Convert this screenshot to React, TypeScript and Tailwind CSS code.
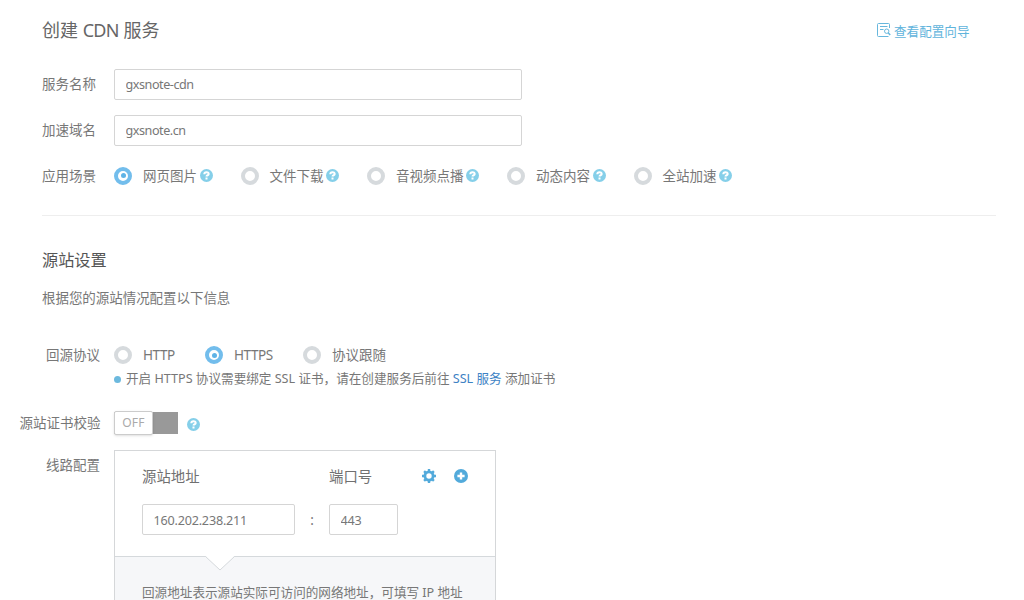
import React from "react";

const scenes = ["网页图片", "文件下载", "音视频点播", "动态内容", "全站加速"];

const Radio: React.FC<{ checked?: boolean }> = ({ checked }) => (
  <span
    className={`flex size-[18px] shrink-0 items-center justify-center rounded-full border-4 bg-white ${
      checked ? "border-[#72bdec]" : "border-[#d6dadd]"
    }`}
  >
    {checked && <span className="size-[5px] rounded-full bg-[#5fb3e6]" />}
  </span>
);

const HelpIcon: React.FC = () => (
  <svg className="size-[13px] shrink-0" viewBox="0 0 13 13" fill="none">
    <circle cx="6.5" cy="6.5" r="6.5" fill="#85cfe9" />
    <path d="M4.3 5.2C4.3 2.7 8.7 2.6 8.7 4.9c0 1.5-2.2 1.2-2.2 2.7" stroke="#fff" strokeWidth="2" />
    <path d="M5.5 8.5h2v2h-2z" fill="#fff" />
  </svg>
);

const GuideIcon: React.FC = () => (
  <svg className="h-[14px] w-[14px]" viewBox="0 0 14 14" fill="none" stroke="#67b7dd" strokeWidth="1">
    <path d="M12.5 5V1.5a1 1 0 0 0-1-1h-10a1 1 0 0 0-1 1v11a1 1 0 0 0 1 1h10M3 3.5h7.5M3 6.5h3.5" />
    <circle cx="9.7" cy="8.2" r="2.2" />
    <path d="M11.2 9.8l2 2.2" strokeWidth="1.5" />
  </svg>
);

const GearIcon: React.FC = () => (
  <svg className="size-[14px]" viewBox="0 0 14 14" fill="none">
    <g stroke="#52aadb" strokeWidth="2.4">
      <path d="M7 0v3M7 11v3M0 7h3M11 7h3M2.1 2.1l2 2M9.9 9.9l2 2M2.1 11.9l2-2M9.9 4.1l2-2" />
    </g>
    <circle cx="7" cy="7" r="4.1" stroke="#52aadb" strokeWidth="2.8" />
  </svg>
);

const PlusIcon: React.FC = () => (
  <svg className="size-[14px]" viewBox="0 0 14 14" fill="none">
    <circle cx="7" cy="7" r="7" fill="#52aadb" />
    <path d="M7 3.4v7.2M3.4 7h7.2" stroke="#fff" strokeWidth="2.4" />
  </svg>
);

const TextField: React.FC<{ value: string; className: string }> = ({ value, className }) => (
  <input
    className={`rounded-[2px] border border-[#d5d5d5] bg-white px-[10.5px] text-[12.6px] text-[#777] outline-none ${className}`}
    defaultValue={value}
  />
);

export default function App() {
  return (
    <div className="h-[600px] w-[1024px] overflow-hidden bg-white font-['Noto_Sans','Noto_Sans_CJK_SC',sans-serif] text-[13.5px] leading-5 text-[#777]">
      <header className="flex h-[69px] items-start justify-between pr-[54.5px] pl-[42px]">
        <h1 className="mt-[18px] text-[18px] leading-6 text-[#666]">
          创建 <span className="tracking-[-0.7px]">CDN</span> 服务
        </h1>
        <a className="mt-[21px] flex gap-[3px] text-[12.6px] text-[#5fb4dc]">
          <span className="mt-[2px]">
            <GuideIcon />
          </span>
          <span className="mt-px">查看配置向导</span>
        </a>
      </header>

      <div className="flex h-[31px] items-center">
        <span className="mb-px ml-[42px] w-[72px]">服务名称</span>
        <TextField value="gxsnote-cdn" className="h-[31px] w-[408px] tracking-[-0.45px]" />
      </div>
      <div className="mt-[15px] flex h-[31px] items-center">
        <span className="mb-[2px] ml-[42px] w-[72px]">加速域名</span>
        <TextField value="gxsnote.cn" className="h-[31px] w-[408px] tracking-[-0.45px]" />
      </div>
      <div className="mt-[19.5px] flex h-5 items-center">
        <span className="ml-[42px] w-[72px]">应用场景</span>
        <div className="flex gap-[28px]">
          {scenes.map((name, i) => (
            <label key={name} className="flex items-center">
              <Radio checked={i === 0} />
              <span className="mr-[2.5px] ml-[11px]">{name}</span>
              <HelpIcon />
            </label>
          ))}
        </div>
      </div>

      <hr className="mt-[29.5px] mr-[28px] ml-[42px] border-[#eee]" />

      <section>
        <h2 className="mt-[32px] ml-[42px] text-[16.2px] leading-6 text-[#555]">源站设置</h2>
        <p className="mt-[16px] ml-[42px] tracking-[-0.05px]">根据您的源站情况配置以下信息</p>

        <div className="mt-[37px] flex h-5 items-center">
          <span className="mr-[14px] w-[100px] text-right">回源协议</span>
          <label className="flex w-[91px] items-center gap-[11px]">
            <Radio />
            <span className="tracking-[-0.4px]">HTTP</span>
          </label>
          <label className="flex w-[98px] items-center gap-[11px]">
            <Radio checked />
            <span className="tracking-[-0.4px]">HTTPS</span>
          </label>
          <label className="flex items-center gap-[11px]">
            <Radio />
            协议跟随
          </label>
        </div>
        <div className="mt-1 ml-[114px] flex items-center text-[12.6px]">
          <span className="mr-[5px] size-[7px] rounded-full bg-[#6cb9de]" />
          <p className="whitespace-pre">
            开启 HTTPS 协议需要绑定 SSL 证书，请在创建服务后前往 <a className="text-[#3d82c4]">SSL 服务</a> 添加证书
          </p>
        </div>

        <div className="mt-[22px] flex h-6 items-center">
          <span className="mr-[13.5px] w-[100.5px] text-right">源站证书校验</span>
          <div className="flex h-[22px] w-[64px] bg-[#999]">
            <span className="-my-px flex h-6 w-[39px] items-center justify-center rounded-[2px] border border-[#ccc] bg-white text-[12px] tracking-[0.3px] text-[#aaa] shadow-sm">
              OFF
            </span>
          </div>
          <span className="mt-[3px] ml-[9px]">
            <HelpIcon />
          </span>
        </div>

        <div className="mt-[15px] flex items-start">
          <span className="mt-[5px] mr-[14px] w-[100px] text-right">线路配置</span>
          <div className="w-[382px] border border-[#d5d7d9]">
            <div className="flex h-[105px] flex-col pl-[27px]">
              <div className="mt-[15px] flex items-center text-[14.4px] text-[#707070]">
                <span className="mt-px -mb-px w-[187px]">源站地址</span>
                <span className="mt-px -mb-px w-[92.5px]">端口号</span>
                <span className="mr-[18.5px]">
                  <GearIcon />
                </span>
                <PlusIcon />
              </div>
              <div className="mt-[18px] flex items-center">
                <TextField value="160.202.238.211" className="h-[31px] w-[153px] pt-[2px] tracking-[-0.2px]" />
                <span className="w-[34px] text-center">:</span>
                <TextField value="443" className="h-[31px] w-[69px] pt-[2px] tracking-[-0.2px]" />
              </div>
            </div>
            <div className="relative h-[80px] border-t border-[#d5d9dc] bg-[#f6f7f9] pt-[26px] pl-[27px] text-[12.6px]">
              <svg className="absolute -top-px left-[89px] h-[16px] w-[32px]" viewBox="0 0 32 16">
                <path d="M1.5 0L16 14L30.5 0" fill="#fff" />
                <path d="M1.5 .5L16 14L30.5 .5" fill="none" stroke="#d5d9dc" />
              </svg>
              <p className="whitespace-nowrap">回源地址表示源站实际可访问的网络地址，可填写 IP 地址</p>
            </div>
          </div>
        </div>
      </section>
    </div>
  );
}
